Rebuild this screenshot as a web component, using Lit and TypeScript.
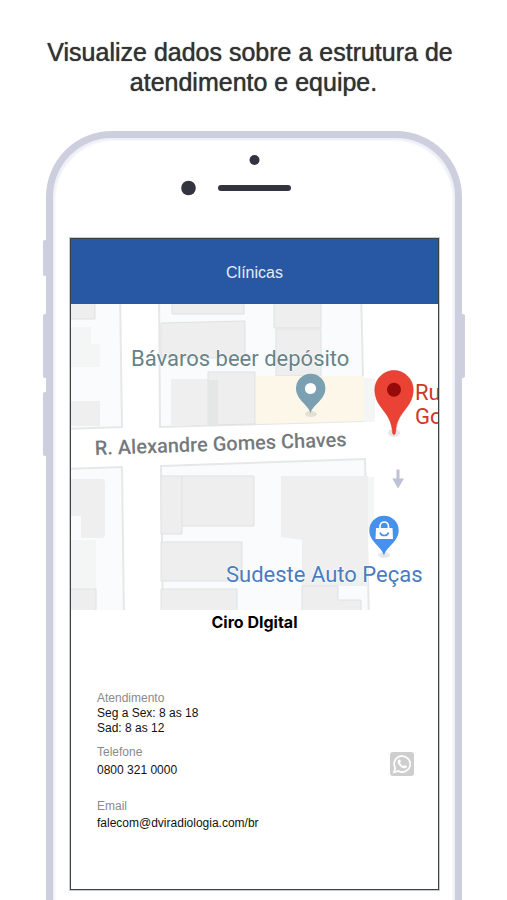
import { LitElement, html, css } from "lit";
import { customElement } from "lit/decorators.js";

@customElement("clinic-map")
class ClinicMap extends LitElement {
  static styles = css`
    :host { display: block; }
    .map { display: block; width: 100%; height: auto; background: #fff; }
    .label { font-family: Roboto, sans-serif; font-size: 22px; paint-order: stroke; stroke: #fff; stroke-width: 1px; stroke-linejoin: round; }
    .bar { fill: #668389; }
    .street { font-size: 20px; font-weight: 500; fill: #747a7c; }
    .place { fill: #d1362c; }
    .shop { fill: #4a7cc0; }
    .lot { fill: #f9fbfc; stroke: #e6e8e8; stroke-width: 2px; }
    .house { fill: #eeeeee; stroke: #e0e1e1; stroke-width: 1px; }
    .soft { fill: #efefef; }
    .faint { fill: #f4f5f5; }
    .yard { fill: #fdf7ea; }
  `;

  render() {
    return html`
      <svg class="map" viewBox="71 304 367 306" role="img" aria-label="Mapa da clínica">
        <path class="lot" d="M60 290H120L122 427L60 429Z" />
        <path class="lot" d="M159 290H361L364 421L160 427Z" />
        <path class="lot" d="M60 469L122 467L124 620H60Z" />
        <path class="lot" d="M161 466L365 459L369 620H163Z" />

        <path class="house" d="M60 290H95V319H60Z" />
        <path class="faint" d="M71 327H91V344H100V367H71Z" />
        <path class="soft" d="M71 401H100V426H71Z" />
        <path class="house" d="M172 290H244V314H172Z" />
        <path class="house" d="M161 323L245 321V358H161Z" />
        <path class="soft" d="M171 379H208V425H171Z" />
        <path class="house" d="M208 372H255V424L208 425Z" />
        <path fill="#e5e6e6" d="M208 380H218V425H208Z" />
        <path class="house" d="M274 290H321V328H274Z" />
        <path class="house" d="M276 329H321V376H276Z" />
        <path class="yard" d="M256 376H364V421L256 424Z" />
        <path class="faint" d="M364 378H375V422H364Z" />

        <path class="soft" d="M71 479H101Q105 479 105 483V534Q105 538 101 538H81V516H71Z" />
        <path class="faint" d="M71 540H96V589H71Z" />
        <path class="house" d="M60 589H96V620H60Z" />
        <path class="house" d="M161 476H254V526H182V534H161Z" />
        <path class="house" d="M182 476V526" />
        <path class="house" d="M161 542H242V581H161Z" />
        <path class="house" d="M161 589H237V620H161Z" />
        <path class="soft" d="M281 476H368V586H302V540L281 537Z" />
        <path class="faint" d="M368 477H374V530H368Z" />
        <path class="house" d="M302 586H338V600H361V620H302Z" />

        <text class="label bar" x="131" y="366">Bávaros beer depósito</text>
        <text class="label street" x="95" y="455" transform="rotate(-2 95 455)">R. Alexandre Gomes Chaves</text>
        <text class="label place" x="415" y="400">Rua</text>
        <text class="label place" x="415" y="424">Go</text>
        <text class="label shop" x="226" y="582">Sudeste Auto Peças</text>

        <ellipse cx="311" cy="414" rx="6" ry="3" fill="#e3e0d8" />
        <path fill="#7ba0b2" d="M310.500 413.500C309 405 296 400 296 388.500A14.700 14.700 0 0 1 325.400 388.500C325.400 400 312 405 310.500 413.500Z" />
        <circle cx="310.500" cy="388.500" r="5.600" fill="#fff" />

        <ellipse cx="394" cy="433" rx="6" ry="4" fill="#e6e6e6" />
        <path fill="#ea4335" stroke="#d33b2f" stroke-width=".6" d="M394 434.500C392.500 434.500 392.500 432 392 428C389.500 411 374.800 407 374.800 389.700A19.200 19.200 0 0 1 413.200 389.700C413.200 407 398.500 411 396 428C395.500 432 395.500 434.500 394 434.500Z" />
        <circle cx="394" cy="389.700" r="7" fill="#960a0a" />

        <path fill="#bfc2d6" d="M396.500 469.500H399.500V478.500H404L398 488.500L392.300 478.500H396.500Z" />

        <ellipse cx="384" cy="555" rx="6" ry="3" fill="#e8e8ea" />
        <path fill="#4690ee" d="M384 556C382.500 547 369.300 542 369.300 530.500A14.700 14.700 0 0 1 398.700 530.500C398.700 542 385.500 547 384 556Z" />
        <path fill="#fff" d="M376 528H392.500L393 539H375.500Z" />
        <path fill="none" stroke="#fff" stroke-width="1.700" d="M380 529V526.500C380 520.500 388.500 520.500 388.500 526.500V529" />
        <path fill="none" stroke="#4690ee" stroke-width="1.600" d="M380 532.500C381 536.500 387.500 536.500 388.500 532.500" />
      </svg>
    `;
  }
}

@customElement("app-root")
class AppRoot extends LitElement {
  static styles = css`
    :host {
      display: flex;
      flex-direction: column;
      min-height: 100vh;
      background: #fff;
      font-family: "Liberation Sans", Arial, sans-serif;
      color: #111;
    }
    * { box-sizing: border-box; }
    .headline {
      margin: 0;
      padding: 37px 16px 34px;
      font-size: 25px;
      line-height: 30px;
      font-weight: 400;
      text-align: center;
      color: #333;
      text-shadow: 0 0 1px #333;
    }
    .phone {
      position: relative;
      flex: 1;
      margin: 0 45px 0 46px;
      padding: 0 16px 11px 17px;
      border: 7px solid #cdcfde;
      border-bottom: 0;
      border-radius: 66px 66px 0 0;
      box-shadow: inset 3px 3px 2px -1px #eef0f7, inset -3px 3px 2px -1px #eef0f7;
    }
    .key { position: absolute; width: 3px; height: 64px; background: #cdcfde; border-radius: 2px 0 0 2px; left: -10px; }
    .mute { top: 102px; height: 36px; }
    .up { top: 176px; }
    .down { top: 254px; }
    .power { top: 176px; left: auto; right: -10px; border-radius: 0 2px 2px 0; }
    .sensors { display: block; width: 147px; height: 100px; margin: 0 auto; }
    .screen { border: 1px solid #3c4145; box-shadow: 0 0 0 1px #c9cccf; background: #fff; padding-bottom: 58px; }
    .bar {
      display: flex;
      align-items: center;
      justify-content: center;
      height: 65px;
      padding-top: 2px;
      background: #2857a4;
    }
    .title { margin: 0; font-size: 16px; line-height: 20px; font-weight: 400; color: #e4edfa; }
    .name { margin: 2px 0 59px; font: 700 16px/20px Inter, sans-serif; text-align: center; color: #000; }
    .details { margin: 0 24px 0 26px; font-size: 12px; line-height: 15px; }
    .row { display: flex; justify-content: space-between; align-items: flex-end; margin-bottom: 21px; }
    .heading { margin: 0; font-size: 12px; font-weight: 400; color: #8a8a8a; }
    .text { margin: 0; }
    .hours { margin-bottom: 9px; }
    .spaced { margin-top: 3px; }
    .email { margin-top: 2px; }
    .link { color: inherit; text-decoration: none; }
    .chat { display: block; width: 24px; height: 24px; margin-bottom: 2px; padding: 0; border: 0; border-radius: 3px; background: #cecece; }
    .glyph { display: block; width: 24px; height: 24px; }
  `;

  render() {
    return html`
      <h1 class="headline">Visualize dados sobre a estrutura de&nbsp;<br />atendimento e equipe.</h1>
      <main class="phone">
        <span class="key mute"></span>
        <span class="key up"></span>
        <span class="key down"></span>
        <span class="key power"></span>
        <svg class="sensors" viewBox="0 0 147 100" aria-hidden="true">
          <circle cx="73.500" cy="22" r="5" fill="#32343f" />
          <circle cx="7.500" cy="50" r="7.300" fill="#32343f" />
          <rect x="37" y="47" width="73" height="6" rx="3" fill="#32343f" />
        </svg>
        <section class="screen">
          <header class="bar"><h2 class="title">Clínicas</h2></header>
          <clinic-map></clinic-map>
          <h3 class="name">Ciro DIgital</h3>
          <div class="details">
            <div class="hours">
              <h4 class="heading">Atendimento</h4>
              <p class="text">Seg a Sex: 8 as 18</p>
              <p class="text">Sad: 8 as 12</p>
            </div>
            <div class="row">
              <div>
                <h4 class="heading">Telefone</h4>
                <p class="text spaced"><a class="link" href="tel:08003210000">0800 321 0000</a></p>
              </div>
              <button class="chat" type="button" aria-label="WhatsApp">
                <svg class="glyph" viewBox="0 0 24 24" fill="none" stroke="#fff">
                  <path stroke-width="1.700" d="M4 20.200L5.200 16A8 8 0 1 1 8.200 19Z" />
                  <path fill="#fff" stroke="none" d="M9 7.600C9.700 7.300 10 7.500 10.200 8L10.900 9.500C11 10 10.300 10.600 10.100 11C11 12.600 12 13.400 13.600 14.100C14.100 13.700 14.500 12.800 15 13L16.800 13.900C17.300 14.200 16.800 15.500 16 16C14.500 17 11.700 15.700 9.900 13.900C8 12 6.500 9.400 9 7.600Z" />
                </svg>
              </button>
            </div>
            <div>
              <h4 class="heading">Email</h4>
              <p class="text email"><a class="link" href="mailto:falecom@dviradiologia.com/br">falecom@dviradiologia.com/br</a></p>
            </div>
          </div>
        </section>
      </main>
    `;
  }
}
